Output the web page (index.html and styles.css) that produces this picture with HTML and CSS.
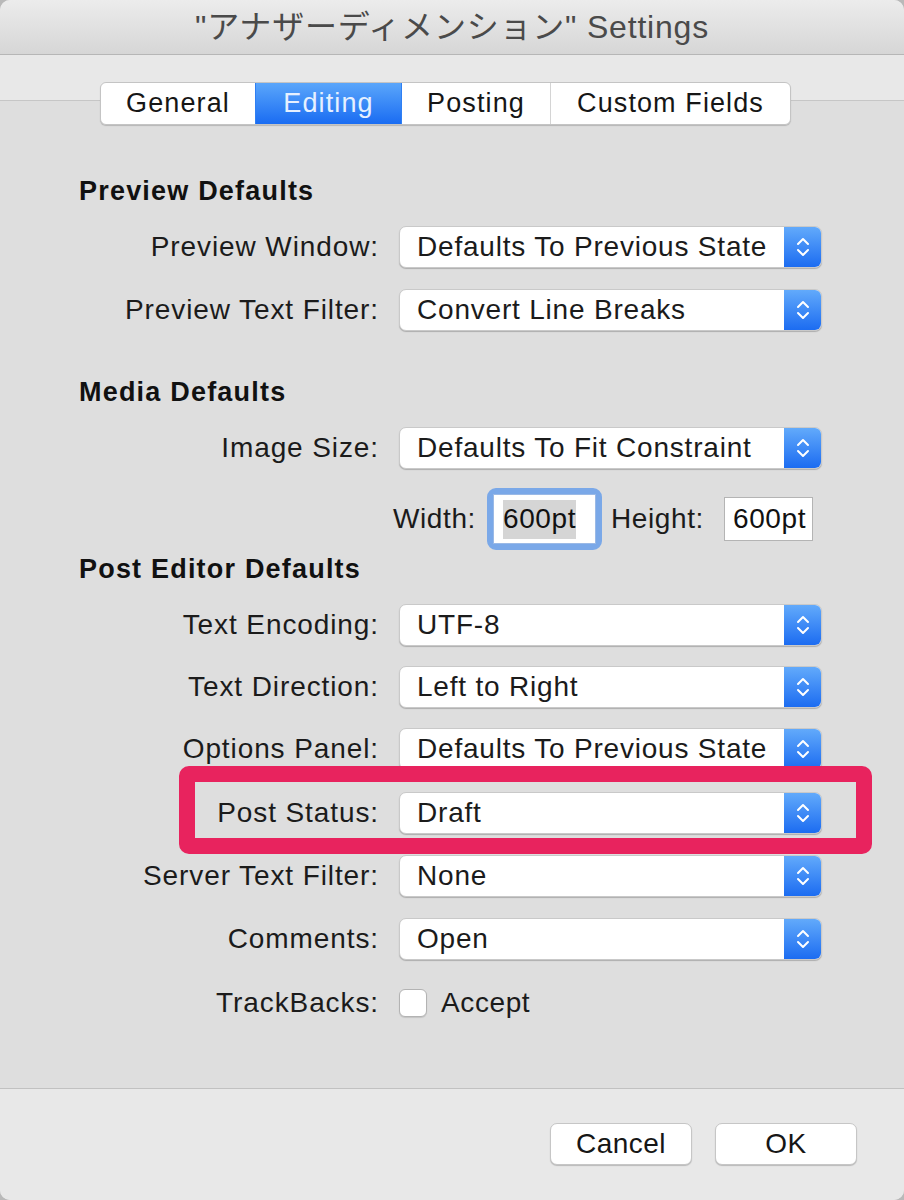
FILE: index.html
```html
<!DOCTYPE html>
<html>
<head>
<meta charset="utf-8">
<link rel="stylesheet" href="styles.css">
</head>
<body>
<div class="window">
  <div class="titlebar">"アナザーディメンション" Settings</div>
  <div class="toolbar">
    <div class="tabs">
      <div class="tab tab-general">General</div>
      <div class="tab tab-editing active">Editing</div>
      <div class="tab tab-posting">Posting</div>
      <div class="tab tab-custom">Custom Fields</div>
    </div>
  </div>
  <div class="panel">
    <div class="heading h-preview">Preview Defaults</div>
    <div class="row r-first">
      <div class="label">Preview Window:</div>
      <div class="popup"><span class="value">Defaults To Previous State</span><span class="stepper"><svg width="16" height="24" viewBox="0 0 16 24"><path d="M3 9 L8 4 L13 9 M3 15 L8 20 L13 15" fill="none" stroke="#fff" stroke-width="2" stroke-linecap="round" stroke-linejoin="round"/></svg></span></div>
    </div>
    <div class="row">
      <div class="label">Preview Text Filter:</div>
      <div class="popup"><span class="value">Convert Line Breaks</span><span class="stepper"><svg width="16" height="24" viewBox="0 0 16 24"><path d="M3 9 L8 4 L13 9 M3 15 L8 20 L13 15" fill="none" stroke="#fff" stroke-width="2" stroke-linecap="round" stroke-linejoin="round"/></svg></span></div>
    </div>

    <div class="heading h-media">Media Defaults</div>
    <div class="row r-first">
      <div class="label">Image Size:</div>
      <div class="popup"><span class="value">Defaults To Fit Constraint</span><span class="stepper"><svg width="16" height="24" viewBox="0 0 16 24"><path d="M3 9 L8 4 L13 9 M3 15 L8 20 L13 15" fill="none" stroke="#fff" stroke-width="2" stroke-linecap="round" stroke-linejoin="round"/></svg></span></div>
    </div>
    <div class="size-row">
      <div class="wlabel">Width:</div>
      <div class="focus-ring"><div class="field field-width"><span class="selected">600pt</span></div></div>
      <div class="hlabel">Height:</div>
      <div class="field field-height">600pt</div>
    </div>

    <div class="heading h-post">Post Editor Defaults</div>
    <div class="row r-first">
      <div class="label">Text Encoding:</div>
      <div class="popup"><span class="value">UTF-8</span><span class="stepper"><svg width="16" height="24" viewBox="0 0 16 24"><path d="M3 9 L8 4 L13 9 M3 15 L8 20 L13 15" fill="none" stroke="#fff" stroke-width="2" stroke-linecap="round" stroke-linejoin="round"/></svg></span></div>
    </div>
    <div class="row r-20">
      <div class="label">Text Direction:</div>
      <div class="popup"><span class="value">Left to Right</span><span class="stepper"><svg width="16" height="24" viewBox="0 0 16 24"><path d="M3 9 L8 4 L13 9 M3 15 L8 20 L13 15" fill="none" stroke="#fff" stroke-width="2" stroke-linecap="round" stroke-linejoin="round"/></svg></span></div>
    </div>
    <div class="row r-20">
      <div class="label">Options Panel:</div>
      <div class="popup"><span class="value">Defaults To Previous State</span><span class="stepper"><svg width="16" height="24" viewBox="0 0 16 24"><path d="M3 9 L8 4 L13 9 M3 15 L8 20 L13 15" fill="none" stroke="#fff" stroke-width="2" stroke-linecap="round" stroke-linejoin="round"/></svg></span></div>
    </div>
    <div class="row r-22">
      <div class="label">Post Status:</div>
      <div class="popup"><span class="value">Draft</span><span class="stepper"><svg width="16" height="24" viewBox="0 0 16 24"><path d="M3 9 L8 4 L13 9 M3 15 L8 20 L13 15" fill="none" stroke="#fff" stroke-width="2" stroke-linecap="round" stroke-linejoin="round"/></svg></span></div>
    </div>
    <div class="row">
      <div class="label">Server Text Filter:</div>
      <div class="popup"><span class="value">None</span><span class="stepper"><svg width="16" height="24" viewBox="0 0 16 24"><path d="M3 9 L8 4 L13 9 M3 15 L8 20 L13 15" fill="none" stroke="#fff" stroke-width="2" stroke-linecap="round" stroke-linejoin="round"/></svg></span></div>
    </div>
    <div class="row">
      <div class="label">Comments:</div>
      <div class="popup"><span class="value">Open</span><span class="stepper"><svg width="16" height="24" viewBox="0 0 16 24"><path d="M3 9 L8 4 L13 9 M3 15 L8 20 L13 15" fill="none" stroke="#fff" stroke-width="2" stroke-linecap="round" stroke-linejoin="round"/></svg></span></div>
    </div>
    <div class="row r-22">
      <div class="label">TrackBacks:</div>
      <div class="check"><span class="box"></span><span class="check-label">Accept</span></div>
    </div>

    <div class="highlight"></div>
  </div>
  <div class="footer">
    <div class="button btn-cancel">Cancel</div>
    <div class="button btn-ok">OK</div>
  </div>
</div>
</body>
</html>
```
FILE: styles.css
```css
html, body {
  margin: 0;
  padding: 0;
}
body {
  width: 904px;
  height: 1200px;
  background: #b9b9b9;
  font-family: "Liberation Sans", Arial, "Noto Sans CJK JP", sans-serif;
  color: #1b1b1b;
  overflow: hidden;
}
.window {
  width: 904px;
  height: 1200px;
  display: flex;
  flex-direction: column;
  border-radius: 10px;
  overflow: hidden;
  background: #dedede;
}
.titlebar {
  height: 48px;
  flex: none;
  border-bottom: 1px solid #b6b6b6;
  background: linear-gradient(#ececec, #d6d6d6);
  display: flex;
  align-items: center;
  justify-content: center;
  font-family: "Liberation Sans", "Noto Sans CJK JP", sans-serif;
  font-size: 32px;
  letter-spacing: 0.8px;
  color: #4a4a4a;
  padding-bottom: 6px;
  box-sizing: content-box;
}
.toolbar {
  height: 45px;
  flex: none;
  background: #e8e8e8;
  border-bottom: 1px solid #c6c6c6;
  display: flex;
  justify-content: flex-start;
  padding-left: 100px;
}
.tabs {
  position: relative;
  z-index: 2;
  display: flex;
  margin-top: 27px;
  height: 41px;
  background: #fff;
  border: 1px solid #c4c4c4;
  border-radius: 6px;
  box-shadow: 0 1px 1px rgba(0,0,0,0.18);
  overflow: hidden;
}
.tab {
  display: flex;
  align-items: center;
  justify-content: center;
  font-size: 27px;
  letter-spacing: 1.1px;
  color: #161616;
  border-left: 1px solid #d4d4d4;
  box-sizing: border-box;
}
.tab-general { width: 154px; border-left: none; }
.tab-editing { width: 146px; }
.tab-posting { width: 149px; }
.tab-custom { width: 240px; }
.tab.active {
  background: linear-gradient(#5aa6fb, #1a6cf2);
  color: #e6f0ff;
  border-left-color: #2f7ff3;
}
.tab-posting { border-left-color: #2f7ff3; }

.panel {
  position: relative;
  flex: 1;
  background: #dedede;
  padding-top: 75px;
  box-sizing: border-box;
}
.heading {
  height: 30px;
  line-height: 30px;
  padding-left: 79px;
  font-weight: bold;
  font-size: 27px;
  letter-spacing: 1.2px;
  color: #111;
}
.h-media { margin-top: 46px; }
.h-post { margin-top: 4px; }

.row {
  display: flex;
  align-items: center;
  height: 42px;
  margin-top: 21px;
}
.row.r-first { margin-top: 20px; }
.row.r-20 { margin-top: 20px; }
.row.r-22 { margin-top: 22px; }
.label {
  width: 399px;
  padding-right: 20px;
  box-sizing: border-box;
  text-align: right;
  font-size: 28px;
  letter-spacing: 0.9px;
  color: #1b1b1b;
  white-space: nowrap;
}
.popup {
  width: 423px;
  height: 42px;
  box-sizing: border-box;
  display: flex;
  align-items: stretch;
  background: #fff;
  border: 1px solid #c9c9c9;
  border-radius: 7px;
  box-shadow: 0 1px 1px rgba(0,0,0,0.22);
  overflow: hidden;
}
.value {
  flex: 1;
  display: flex;
  align-items: center;
  padding-left: 17px;
  font-size: 28px;
  letter-spacing: 0.8px;
  color: #1b1b1b;
  white-space: nowrap;
}
.stepper {
  width: 37px;
  flex: none;
  display: flex;
  align-items: center;
  justify-content: center;
  background: linear-gradient(#62aafb, #1c6cf1);
}

.size-row {
  display: flex;
  align-items: center;
  height: 62px;
  margin-top: 19px;
  padding-left: 393px;
}
.wlabel {
  width: 94px;
  font-size: 28px;
  letter-spacing: 0.6px;
}
.focus-ring {
  width: 115px;
  height: 62px;
  box-sizing: border-box;
  border: 6px solid #7aa8e8;
  border-radius: 9px;
  display: flex;
}
.field {
  background: #fff;
  font-size: 28px;
  letter-spacing: 0.6px;
  color: #111;
  display: flex;
  align-items: center;
  box-sizing: border-box;
}
.field-width {
  flex: 1;
  border: 1px solid #9ab9e6;
  padding-left: 9px;
}
.selected {
  background: #d5d5d5;
  padding: 3px 0 4px;
}
.hlabel {
  width: 122px;
  padding-left: 9px;
  box-sizing: border-box;
  font-size: 28px;
  letter-spacing: 0.6px;
}
.field-height {
  width: 89px;
  height: 44px;
  border: 1px solid #b4b4b4;
  padding-left: 8px;
}

.check {
  display: flex;
  align-items: center;
}
.box {
  width: 28px;
  height: 28px;
  box-sizing: border-box;
  background: #fff;
  border: 1px solid #b3b3b3;
  border-radius: 6px;
  box-shadow: 0 1px 1px rgba(0,0,0,0.12);
}
.check-label {
  margin-left: 14px;
  font-size: 28px;
  letter-spacing: 0.6px;
}

.highlight {
  position: absolute;
  left: 179px;
  top: 665px;
  width: 693px;
  height: 88px;
  box-sizing: border-box;
  border: 16px solid #e8235e;
  border-radius: 10px;
}

.footer {
  height: 112px;
  flex: none;
  border-top: 1px solid #c1c1c1;
  background: #e8e8e8;
  display: flex;
  justify-content: flex-end;
  align-items: flex-start;
  padding-right: 47px;
  box-sizing: border-box;
}
.button {
  margin-top: 34px;
  width: 142px;
  height: 42px;
  box-sizing: border-box;
  background: #fff;
  border: 1px solid #c6c6c6;
  border-radius: 7px;
  box-shadow: 0 1px 1px rgba(0,0,0,0.2);
  display: flex;
  align-items: center;
  justify-content: center;
  font-size: 28px;
  letter-spacing: 0.5px;
  color: #161616;
}
.btn-ok { margin-left: 23px; }
```
